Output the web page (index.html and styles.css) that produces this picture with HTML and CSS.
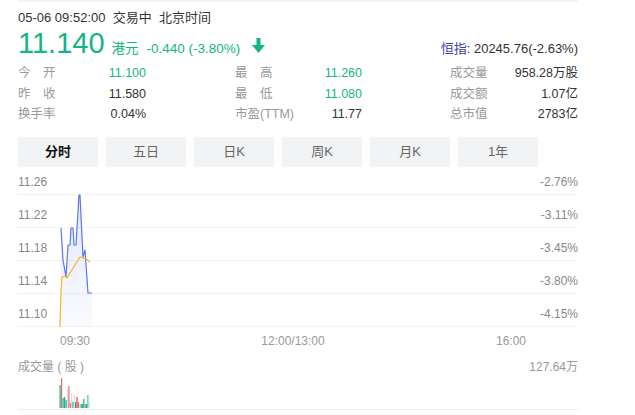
FILE: index.html
```html
<!DOCTYPE html>
<html lang="zh-CN">
<head>
<meta charset="utf-8">
<title>11.140</title>
<link rel="stylesheet" href="styles.css">
</head>
<body>
<div class="wrap">
  <div class="meta">05-06 09:52:00&nbsp;&nbsp;交易中&nbsp;&nbsp;北京时间</div>
  <div class="price-row">
    <span class="price">11.140</span>
    <span class="cur">港元</span>
    <span class="chg">-0.440 (-3.80%)</span>
    <svg class="arrow" width="13" height="15" viewBox="0 0 13 15"><path d="M4.5 0h4v7h4.5L6.5 15 0 7h4.5z" fill="#13b487"/></svg>
    <span class="index"><span class="index-name">恒指</span>: 20245.76(-2.63%)</span>
  </div>

  <div class="stats">
    <div class="col c1">
      <div class="row"><span class="lbl">今　开</span><span class="val up">11.100</span></div>
      <div class="row"><span class="lbl">昨　收</span><span class="val">11.580</span></div>
      <div class="row"><span class="lbl">换手率</span><span class="val">0.04%</span></div>
    </div>
    <div class="col c2">
      <div class="row"><span class="lbl">最　高</span><span class="val up">11.260</span></div>
      <div class="row"><span class="lbl">最　低</span><span class="val up">11.080</span></div>
      <div class="row"><span class="lbl">市盈(TTM)</span><span class="val">11.77</span></div>
    </div>
    <div class="col c3">
      <div class="row"><span class="lbl">成交量</span><span class="val">958.28万股</span></div>
      <div class="row"><span class="lbl">成交额</span><span class="val">1.07亿</span></div>
      <div class="row"><span class="lbl">总市值</span><span class="val">2783亿</span></div>
    </div>
  </div>

  <div class="tabs">
    <div class="tab active">分时</div>
    <div class="tab">五日</div>
    <div class="tab">日K</div>
    <div class="tab">周K</div>
    <div class="tab">月K</div>
    <div class="tab">1年</div>
  </div>

  <div class="chart">
    <div class="grow first"><span>11.26</span><span>-2.76%</span></div>
    <div class="grow"><span>11.22</span><span>-3.11%</span></div>
    <div class="grow"><span>11.18</span><span>-3.45%</span></div>
    <div class="grow"><span>11.14</span><span>-3.80%</span></div>
    <div class="grow"><span>11.10</span><span>-4.15%</span></div>
    <svg class="plot" width="560" height="160" viewBox="0 0 560 160">
      <defs>
        <linearGradient id="fill" x1="0" y1="0" x2="0" y2="1">
          <stop offset="0" stop-color="#5a78f0" stop-opacity="0.18"/>
          <stop offset="1" stop-color="#5a78f0" stop-opacity="0.03"/>
        </linearGradient>
      </defs>
      <polygon fill="url(#fill)" points="43,57 45,89 48,106 50,74 52,74 53,57 55,57 56,74 58,74 61,24 62,24 65,86 67,79 70,122 74,122 74,156 43,156"/>
      <polyline fill="none" stroke="#5a78f0" stroke-width="1.2" stroke-linejoin="round" points="43,57 45,89 48,106 50,74 52,74 53,57 55,57 56,74 58,74 61,24 62,24 65,86 67,79 70,122 74,122"/>
      <polyline fill="none" stroke="#f5b51e" stroke-width="1.2" stroke-linejoin="round" points="42,156 43,119 44,106 47,105 49,107 52,102 57,94 62,86 65,87 68,88 72,91"/>
    </svg>
  </div>

  <div class="times"><span>09:30</span><span>12:00/13:00</span><span>16:00</span></div>

  <div class="vol-head"><span>成交量 ( 股 )</span><span>127.64万</span></div>
  <div class="vol">
    <svg width="560" height="31" viewBox="0 0 560 31">
      <g>
        <rect x="41.5" y="7" width="1.2" height="23" fill="#13b487"/>
        <rect x="43" y="0" width="1.2" height="30" fill="#f06b6b"/>
        <rect x="44.5" y="20" width="1.2" height="10" fill="#13b487"/>
        <rect x="46" y="19" width="1.2" height="11" fill="#13b487"/>
        <rect x="47.5" y="22" width="1.2" height="8" fill="#13b487"/>
        <rect x="49" y="11" width="1.2" height="19" fill="#dcdcdc"/>
        <rect x="50.3" y="8" width="1.2" height="22" fill="#f06b6b"/>
        <rect x="51.7" y="25" width="1.2" height="5" fill="#f06b6b"/>
        <rect x="53" y="15" width="1.2" height="15" fill="#dcdcdc"/>
        <rect x="54.4" y="24" width="1.2" height="6" fill="#13b487"/>
        <rect x="55.7" y="17" width="1.2" height="13" fill="#dcdcdc"/>
        <rect x="57" y="24" width="1.2" height="6" fill="#13b487"/>
        <rect x="58.4" y="19" width="1.2" height="11" fill="#e53a3a"/>
        <rect x="59.8" y="24" width="1.2" height="6" fill="#f06b6b"/>
        <rect x="61.1" y="25" width="1.2" height="5" fill="#dcdcdc"/>
        <rect x="62.5" y="26" width="1.2" height="4" fill="#13b487"/>
        <rect x="63.9" y="26" width="1.2" height="4" fill="#13b487"/>
        <rect x="65.2" y="21" width="1.2" height="9" fill="#13b487"/>
        <rect x="66.6" y="26" width="1.2" height="4" fill="#f06b6b"/>
        <rect x="68" y="26" width="1.2" height="4" fill="#13b487"/>
        <rect x="69.3" y="17" width="1.2" height="13" fill="#2ccf9f"/>
        <rect x="70.7" y="24" width="1.2" height="6" fill="#dcdcdc"/>
      </g>
    </svg>
  </div>
</div>
</body>
</html>
```
FILE: styles.css
```css
* { box-sizing: border-box; }
html, body { margin: 0; padding: 0; background: #fff; }
body {
  font-family: "Liberation Sans", Arial, "Noto Sans CJK SC", sans-serif;
  color: #333;
  font-size: 12px;
}
.wrap {
  width: 560px;
  margin-left: 18px;
  border-top: 2px solid #f3f3f3;
}
.meta {
  font-size: 13px;
  line-height: 16px;
  margin-top: 8px;
  color: #333;
}
.price-row {
  display: flex;
  align-items: baseline;
  margin-top: 2px;
  height: 30px;
  color: #13b487;
}
.price {
  font-size: 29px;
  line-height: 30px;
}
.cur { font-size: 13.5px; margin-left: 7px; }
.chg { font-size: 13.5px; margin-left: 8px; }
.arrow { margin-left: 12px; align-self: center; margin-top: 5px; }
.index {
  margin-left: auto;
  font-size: 13px;
  color: #333;
}
.index-name { color: #3c3cb4; }

.stats {
  display: flex;
  margin-top: 5px;
}
.col { display: flex; flex-direction: column; }
.c1 { width: 128px; }
.c2 { width: 127px; margin-left: 89px; }
.c3 { width: 128px; margin-left: 88px; }
.row {
  display: flex;
  justify-content: space-between;
  height: 20.5px;
  line-height: 20px;
  font-size: 12px;
}
.lbl { color: #999; font-size: 12.5px; }
.val { color: #333; font-size: 12.5px; }
.val.up { color: #13b487; }

.tabs {
  display: flex;
  gap: 8px;
  margin-top: 12px;
}
.tab {
  width: 80px;
  height: 30px;
  line-height: 30px;
  text-align: center;
  background: #f2f3f5;
  border-radius: 3px;
  font-size: 13px;
  color: #666;
}
.tab.active { color: #111; font-weight: bold; }

.chart {
  position: relative;
  margin-top: 4px;
}
.grow {
  display: flex;
  justify-content: space-between;
  align-items: flex-end;
  height: 33px;
  padding-bottom: 5px;
  border-bottom: 1px solid #f2f2f2;
  font-size: 12px;
  line-height: 14px;
  color: #888;
}
.grow.first { height: 24px; }
.plot {
  position: absolute;
  left: 0;
  top: 0;
}

.times {
  display: flex;
  justify-content: space-between;
  padding-left: 42px;
  padding-right: 52px;
  margin-top: 7px;
  font-size: 12px;
  line-height: 14px;
  color: #999;
}
.vol-head {
  display: flex;
  justify-content: space-between;
  margin-top: 12px;
  font-size: 12px;
  line-height: 14px;
  color: #999;
}
.vol {
  margin-top: 4px;
  border-bottom: 1px solid #eee;
  height: 32px;
}
.vol svg { display: block; }
```
